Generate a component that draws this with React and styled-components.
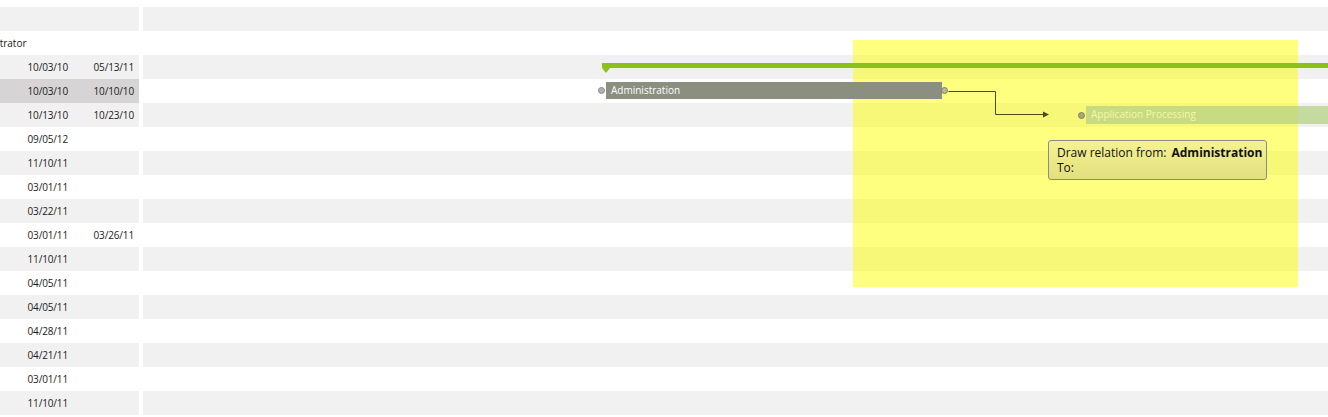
import React from "react";
import styled, { createGlobalStyle } from "styled-components";

const GlobalStyle = createGlobalStyle`
  html, body {
    margin: 0;
    padding: 0;
    background: #ffffff;
  }
  body {
    font-family: "Open Sans", "Noto Sans", sans-serif;
    color: #1a1a1a;
  }
`;

const ROW = 24;

const Page = styled.div`
  width: 1328px;
  height: 417px;
  overflow: hidden;
  padding-top: 7px;
  box-sizing: border-box;
  display: flex;
  gap: 4px;
`;

const GridPanel = styled.div`
  width: 139px;
  flex: none;
  overflow: hidden;
  display: flex;
  flex-direction: column;
`;

const GridRow = styled.div`
  height: ${ROW}px;
  flex: none;
  display: grid;
  grid-template-columns: 6px 66px 67px;
  align-items: center;
  font-size: 10px;
  letter-spacing: -0.15px;
  background: ${(p) => (p.$selected ? "#d6d4d4" : p.$alt ? "#f1f1f1" : "#ffffff")};
`;

const GroupLabel = styled.div`
  height: ${ROW}px;
  flex: none;
  display: flex;
  align-items: center;
  font-size: 10px;
  white-space: nowrap;
  & span {
    margin-left: -38px;
  }
`;

const DateCell = styled.div`
  text-align: right;
  padding-right: ${(p) => (p.$last ? 5 : 4)}px;
  white-space: nowrap;
`;

const Timeline = styled.div`
  position: relative;
  flex: 1;
  overflow: hidden;
  display: flex;
  flex-direction: column;
`;

const TimeRow = styled.div`
  position: relative;
  height: ${ROW}px;
  flex: none;
  background: ${(p) => (p.$alt ? "#f1f1f1" : "#ffffff")};
`;

const Highlight = styled.div`
  position: absolute;
  left: 710px;
  top: 33px;
  width: 445px;
  height: 247px;
  background: rgba(255, 255, 0, 0.5);
  pointer-events: none;
`;

const Layer = styled.div`
  position: absolute;
  inset: 0;
  display: flex;
  flex-direction: column;
`;

const LayerRow = styled.div`
  position: relative;
  height: ${ROW}px;
  flex: none;
`;

const SummaryBar = styled.div`
  position: absolute;
  top: 8px;
  right: -20px;
  height: 5px;
  background: #8cc11c;
  &::after {
    content: "";
    position: absolute;
    left: 0;
    top: 5px;
    border-left: 4.5px solid transparent;
    border-right: 4.5px solid transparent;
    border-top: 5px solid #8cc11c;
  }
`;

const Dot = styled.i`
  position: absolute;
  top: 50%;
  width: 7px;
  height: 7px;
  margin-top: -3.5px;
  border-radius: 50%;
  box-sizing: border-box;
  border: 1px solid ${(p) => p.$edge};
  background: ${(p) => p.$fill};
`;

const TaskBar = styled.div`
  position: absolute;
  top: 3px;
  height: ${(p) => p.$h}px;
  display: flex;
  align-items: center;
  padding: 0 0 2px 5px;
  box-sizing: border-box;
  font-size: 10px;
  white-space: nowrap;
  color: ${(p) => p.$ink};
  background: ${(p) => p.$fill};
`;

const Connector = styled.svg`
  position: absolute;
  left: 0;
  top: 0;
  width: 100%;
  height: 160px;
  overflow: visible;
`;

const Tooltip = styled.div`
  position: absolute;
  left: 905px;
  top: 133px;
  width: 219px;
  height: 40px;
  box-sizing: border-box;
  border: 1px solid #8c8c86;
  border-radius: 3px;
  background: linear-gradient(#f4f292, #e3df80);
  padding: 4px 0 0 8px;
  font-size: 12px;
  line-height: 15px;
  color: #111;
  white-space: nowrap;
  & b {
    font-weight: 700;
    margin-left: 5px;
  }
`;

const dates = [
  ["10/03/10", "05/13/11"],
  ["10/03/10", "10/10/10"],
  ["10/13/10", "10/23/10"],
  ["09/05/12", ""],
  ["11/10/11", ""],
  ["03/01/11", ""],
  ["03/22/11", ""],
  ["03/01/11", "03/26/11"],
  ["11/10/11", ""],
  ["04/05/11", ""],
  ["04/05/11", ""],
  ["04/28/11", ""],
  ["04/21/11", ""],
  ["03/01/11", ""],
  ["11/10/11", ""],
];

const App = () => {
  return (
    <>
      <GlobalStyle />
      <Page>
        <GridPanel>
          <GridRow $alt />
          <GroupLabel>
            <span>Administrator</span>
          </GroupLabel>
          {dates.map((d, i) => (
            <GridRow key={i} $alt={i % 2 === 0} $selected={i === 1}>
              <span />
              <DateCell>{d[0]}</DateCell>
              <DateCell $last>{d[1]}</DateCell>
            </GridRow>
          ))}
        </GridPanel>

        <Timeline>
          <TimeRow $alt />
          <TimeRow />
          {dates.map((_, i) => (
            <TimeRow key={i} $alt={i % 2 === 0} />
          ))}

          <Highlight />

          <Layer>
            <LayerRow />
            <LayerRow />
            <LayerRow>
              <SummaryBar style={{ left: 459 }} />
            </LayerRow>
            <LayerRow>
              <TaskBar $h={17} $fill="#8a8f7f" $ink="#ffffff" style={{ left: 463, width: 336 }}>
                Administration
                <Dot $fill="#b0b0ac" $edge="#8a8a86" style={{ left: -8 }} />
                <Dot $fill="#b8b89c" $edge="#7c7c66" style={{ right: -6 }} />
              </TaskBar>
            </LayerRow>
            <LayerRow>
              <TaskBar
                $h={18}
                $fill="rgba(181, 209, 133, 0.75)"
                $ink="#f6f7a2"
                style={{ left: 943, width: 300 }}
              >
                Application Processing
                <Dot $fill="#a6a67a" $edge="#83835e" style={{ left: -8 }} />
              </TaskBar>
            </LayerRow>
          </Layer>

          <Connector>
            <polyline
              points="805.5,84.5 852.5,84.5 852.5,107.5 901,107.5"
              fill="none"
              stroke="#4a4a1c"
              strokeWidth="1"
            />
            <polygon points="900,104.5 906,107.5 900,110.5" fill="#4a4a1c" />
          </Connector>

          <Tooltip>
            Draw relation from:<b>Administration</b>
            <br />
            To:
          </Tooltip>
        </Timeline>
      </Page>
    </>
  );
};

export default App;
